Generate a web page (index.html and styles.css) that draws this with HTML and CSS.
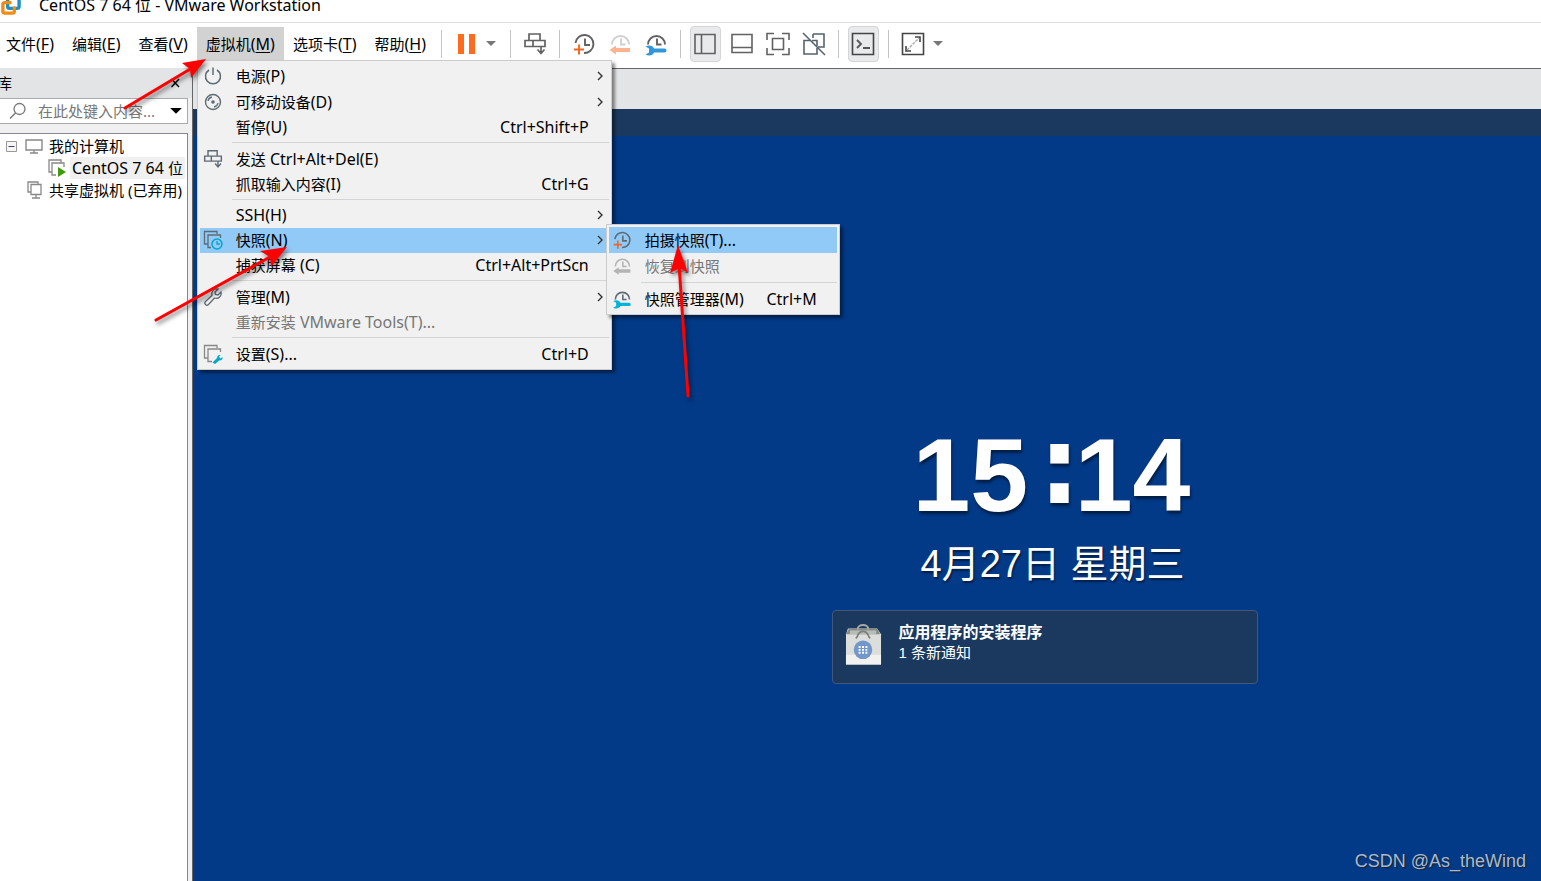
FILE: index.html
```html
<!DOCTYPE html>
<html lang="zh-CN">
<head>
<meta charset="utf-8">
<title>CentOS 7 64 位 - VMware Workstation</title>
<link rel="stylesheet" href="styles.css">
</head>
<body>
<svg class="defs" width="0" height="0" aria-hidden="true">
  <symbol id="send" viewBox="0 0 24 24"><path d="M6 2h11v6.500H6zM2 8.500h8v6H2zM10 8.500h12v6H10zM18 14.500v7M14.500 17.500l3.500 4 3.500-4" fill="none" stroke="currentColor" stroke-width="1.700"/></symbol>
  <symbol id="clock" viewBox="0 0 24 24"><path d="M3.500 11A9 9 0 1 1 12 21M13 6.500v6.500h5" fill="none" stroke="currentColor" stroke-width="1.900"/></symbol>
  <symbol id="halfclock" viewBox="0 0 24 24"><path d="M4 12.500a8.500 8.500 0 0 1 17 0M13 6.500v6h4.500" fill="none" stroke="currentColor" stroke-width="1.900"/></symbol>
  <symbol id="plus" viewBox="0 0 24 24"><path d="M2 17.500h10M7 12.500v10" fill="none" stroke="#f26522" stroke-width="1.900"/></symbol>
  <symbol id="back" viewBox="0 0 24 24"><path d="M1.500 18 8 13.500v2.500h14v4H8v2.500z" fill="currentColor"/></symbol>
  <symbol id="wrench" viewBox="0 0 24 24"><path d="M1.500 14.500C5 12.500 9 13.500 10 16.500H20.500a2 2 0 0 1 0 4H10C9 23.500 5 24.500 1.500 22.500L5 20.500v-4z" fill="currentColor"/></symbol>
  <symbol id="caret" viewBox="0 0 10 6"><path d="M0 0h10L5 5z" fill="currentColor"/></symbol>
  <symbol id="chev" viewBox="0 0 6 10"><path d="M1 1l4 4-4 4" fill="none" stroke="#333" stroke-width="1.400"/></symbol>
</svg>

<header class="titlebar">
  <svg class="logo" viewBox="0 0 22 22" aria-hidden="true"><rect x="8" y="3" width="12" height="11" rx="2" fill="none" stroke="#1d8fc4" stroke-width="3.500"/><path d="M12 8H5a2 2 0 0 0-2 2v7a2 2 0 0 0 2 2h8a2 2 0 0 0 2-2v-5" fill="none" stroke="#f28c13" stroke-width="3.500"/></svg>
  <h1>CentOS 7 64 位 - VMware Workstation</h1>
</header>

<div class="commandbar">
  <nav class="menubar">
    <button>文件<span class="en">(<u>F</u>)</span></button>
    <button>编辑<span class="en">(<u>E</u>)</span></button>
    <button>查看<span class="en">(<u>V</u>)</span></button>
    <div class="dropdown">
      <button class="open">虚拟机<span class="en">(<u>M</u>)</span></button>
      <div class="menu main" role="menu">
        <button class="tall"><svg viewBox="0 0 20 20"><path d="M6 4a7.500 7.500 0 1 0 8 0M10 1.500V9" fill="none" stroke="currentColor" stroke-width="1.500"/></svg><span>电源<span class="en">(P)</span></span><svg class="chev"><use href="#chev"/></svg></button>
        <button class="tall"><svg viewBox="0 0 20 20"><circle cx="10" cy="10" r="7.500" fill="none" stroke="currentColor" stroke-width="1.400"/><circle cx="10" cy="10" r="1.800" fill="currentColor"/><path d="M5 9a5 5 0 0 1 4-4M15 11a5 5 0 0 1-4 4" fill="none" stroke="currentColor" stroke-width="1.300"/></svg><span>可移动设备<span class="en">(D)</span></span><svg class="chev"><use href="#chev"/></svg></button>
        <button><i></i><span>暂停<span class="en">(U)</span></span><kbd>Ctrl+Shift+P</kbd></button>
        <hr>
        <button><svg><use href="#send"/></svg><span>发送<span class="en"> Ctrl+Alt+Del(E)</span></span></button>
        <button><i></i><span>抓取输入内容<span class="en">(I)</span></span><kbd>Ctrl+G</kbd></button>
        <hr class="tight">
        <button><i></i><span class="en">SSH(H)</span><svg class="chev"><use href="#chev"/></svg></button>
        <div class="dropdown">
          <button class="active"><svg viewBox="0 0 20 20"><path d="M5 14H1.500V1.500H14V4M8 17.500H5V5h12.500v3" fill="none" stroke="currentColor" stroke-width="1.300"/><circle cx="14" cy="14" r="5" fill="#91c9f7" stroke="#00a7d0" stroke-width="1.500"/><path d="M14 11v3h3" fill="none" stroke="#00a7d0" stroke-width="1.300"/></svg><span>快照<span class="en">(N)</span></span><svg class="chev"><use href="#chev"/></svg></button>
          <div class="menu sub" role="menu">
            <button class="active tall"><svg><use href="#clock"/><use href="#plus"/></svg><span>拍摄快照<span class="en">(T)...</span></span></button>
            <button class="tall" disabled><svg><use href="#halfclock"/><use href="#back"/></svg><span>恢复到快照</span></button>
            <hr>
            <button><svg><use href="#halfclock"/><use class="cyan" href="#wrench"/></svg><span>快照管理器<span class="en">(M)</span></span><kbd>Ctrl+M</kbd></button>
          </div>
        </div>
        <button><i></i><span>捕获屏幕<span class="en"> (C)</span></span><kbd>Ctrl+Alt+PrtScn</kbd></button>
        <hr>
        <button><svg viewBox="0 0 20 20"><path d="M2.500 17.500c-1.200-1.200-.8-2.200 0-3L9 8.500C8 4.500 11 1 15 2l-3 3 .5 2.500 2.500.5 3-3c1 4-2.500 7.500-6.500 6l-6 6.500c-.8.8-1.800 1.200-3 0z" fill="none" stroke="currentColor" stroke-width="1.300"/></svg><span>管理<span class="en">(M)</span></span><svg class="chev"><use href="#chev"/></svg></button>
        <button disabled><i></i><span>重新安装<span class="en"> VMware Tools(T)...</span></span></button>
        <hr>
        <button><svg viewBox="0 0 20 20"><path d="M4.500 14H1.500V1.500H14V4M9 17.500H5V5h12.500v3" fill="none" stroke="#888" stroke-width="1.300"/><path d="M9.500 18.500l4.500-4.500c-.2-2 1.500-3.500 3.500-3l-1.500 2 1.500 1.500 2-1.500c.5 2.500-1.500 4-3.500 3.500l-4 3.500z" fill="#00a7d0"/></svg><span>设置<span class="en">(S)...</span></span><kbd>Ctrl+D</kbd></button>
      </div>
    </div>
    <button>选项卡<span class="en">(<u>T</u>)</span></button>
    <button>帮助<span class="en">(<u>H</u>)</span></button>
  </nav>
  <div class="group">
    <button class="tool" aria-label="挂起"><svg viewBox="0 0 24 24"><path d="M4 2h6v20H4zM15 2h6v20h-6z" fill="#ff6b1e"/></svg></button><button class="drop" aria-label="电源选项"><svg><use href="#caret"/></svg></button>
  </div>
  <div class="group"><button class="tool" aria-label="发送按键"><svg><use href="#send"/></svg></button></div>
  <div class="group gaps">
    <button class="tool" aria-label="拍摄快照"><svg><use href="#clock"/><use href="#plus"/></svg></button>
    <button class="tool" aria-label="恢复快照" disabled><svg><use class="pale" href="#halfclock"/><use class="peach" href="#back"/></svg></button>
    <button class="tool" aria-label="管理快照"><svg><use href="#halfclock"/><use class="blue" href="#wrench"/></svg></button>
  </div>
  <div class="group gaps">
    <button class="tool on" aria-label="库"><svg viewBox="0 0 24 24"><path d="M2 2.500h20v19H2zM8.500 2.500v19" fill="none" stroke="currentColor" stroke-width="1.600"/></svg></button>
    <button class="tool" aria-label="缩略图栏"><svg viewBox="0 0 24 24"><path d="M2 2.500h20v18H2zM2 15.500h20" fill="none" stroke="currentColor" stroke-width="1.600"/></svg></button>
    <button class="tool" aria-label="全屏"><svg viewBox="0 0 24 24"><path d="M1 8V1.500h7M16 1.500h7V8M23 16v6.500h-7M8 22.500H1V16M6.500 6.500h11v11h-11z" fill="none" stroke="currentColor" stroke-width="1.600"/></svg></button>
    <button class="tool" aria-label="Unity"><svg viewBox="0 0 24 24"><path d="M8 8.500H2V22h13v-6M11 2h11v13h-6M11 2v4M10 8.500h5V14" fill="none" stroke="#56636e" stroke-width="1.600"/><path d="M1 1l22 22" stroke="#56636e" stroke-width="1.600"/></svg></button>
  </div>
  <div class="group"><button class="tool on" aria-label="控制台"><svg viewBox="0 0 24 24"><path d="M1.500 1.500h21v21h-21z" fill="none" stroke="#444" stroke-width="1.600"/><path d="M6 8l4 4-4 4M12 16h7" fill="none" stroke="#555" stroke-width="1.800"/></svg></button></div>
  <div class="group"><button class="tool" aria-label="拉伸"><svg viewBox="0 0 24 24"><path d="M1.500 1.500h21v21h-21zM14 5h5v5M5 14v5h5" fill="none" stroke="#444" stroke-width="1.600"/><path d="M6 18L18 6" stroke="#aaa" stroke-width="1.400" stroke-dasharray="3 1"/></svg></button><button class="drop" aria-label="拉伸选项"><svg><use href="#caret"/></svg></button></div>
</div>

<div class="workspace">
  <aside class="library">
    <div class="libhead"><h2>库</h2><button aria-label="关闭"><svg viewBox="0 0 9 10"><path d="M.5 1l7.500 8M8 1L.5 9" stroke="#000" stroke-width="1.400"/></svg></button></div>
    <div class="search">
      <svg viewBox="0 0 18 18" aria-hidden="true"><circle cx="10.500" cy="7" r="5.500" fill="none" stroke="#777" stroke-width="1.300"/><path d="M6.500 11L1 16.500" stroke="#777" stroke-width="1.500"/></svg>
      <input type="text" aria-label="搜索" placeholder="在此处键入内容...">
      <button aria-label="搜索选项"><svg><use href="#caret"/></svg></button>
    </div>
    <ul class="tree">
      <li><svg class="minus" viewBox="0 0 11 11"><path d="M.5.5h10v10H.5z" fill="#f6f6f6" stroke="#999"/><path d="M2.500 5.500h6" stroke="#446"/></svg><svg class="node" viewBox="0 0 18 18"><path d="M1 3h16v10H1zM9 13v3M5 16h8" fill="none" stroke="#888" stroke-width="1.400"/></svg><span>我的计算机</span></li>
      <li class="child"><svg class="node" viewBox="0 0 18 18"><path d="M4 13H1V1h12v3M8 16H4V4h12v4" fill="none" stroke="#888" stroke-width="1.300"/><path d="M10 8l8 5-8 5z" fill="#3f9b0b"/></svg><span class="selected"><span class="en">CentOS 7 64 </span>位</span></li>
      <li class="root"><svg class="node" viewBox="0 0 18 18"><path d="M6 11H3V1h10v2.500M6 3.500h10v10H6zM11 13.500V17M7 17h8" fill="none" stroke="#888" stroke-width="1.300"/></svg><span>共享虚拟机 (已弃用)</span></li>
    </ul>
  </aside>
  <main class="console">
    <div class="tabstrip"></div>
    <div class="guestbar"></div>
    <div class="guest">
      <div class="clock">15<span class="colon">∶</span>14</div>
      <div class="date">4月27日 星期三</div>
      <section class="notice">
        <svg viewBox="0 0 38 42" aria-hidden="true"><path d="M3 4h30l4 6v31H1V10z" fill="#dcdedb"/><path d="M4 4h29l3 6H1z" fill="#858a85"/><path d="M5 6h27v4H5z" fill="#b8bcb7"/><path d="M13 5c0-6 11-6 11 0" fill="none" stroke="#a6aaa6" stroke-width="2"/><path d="M1 31h36v10H1z" fill="#f1f2f0"/><path d="M11 14c3-1 1-7 7.500-7s4.500 6 7.500 7" fill="none" stroke="#7b7f7b" stroke-width="1.800"/><circle cx="18.500" cy="26" r="9.500" fill="#7297c8"/><path d="M14 23h2M17.500 23h2M21 23h2M14 26h2M17.500 26h2M21 26h2M14 29h2M17.500 29h2M21 29h2" stroke="#fff" stroke-width="2"/></svg>
        <div><h3>应用程序的安装程序</h3><p>1 条新通知</p></div>
      </section>
      <footer class="watermark">CSDN @As_theWind</footer>
    </div>
  </main>
</div>

<svg class="arrows" width="720" height="420" viewBox="0 0 720 420" aria-hidden="true">
  <g fill="none" stroke="#f00" stroke-width="3" stroke-linecap="round"><path d="M125 108L192 68M156 320L270 257M688 396L679 264"/></g>
  <g fill="#f00"><path d="M206 59L191 78L190 69L182 63z"/><path d="M287 247L271 267L270 257L260 251z"/><path d="M678 245L688 273L680 268L670 273z"/></g>
</svg>
</body>
</html>
```

FILE: styles.css
```css
* { box-sizing: border-box; }
body {
  margin: 0;
  height: 100vh;
  display: flex;
  flex-direction: column;
  overflow: hidden;
  position: relative;
  background: #fff;
  color: #000;
  font: 15px/22px "Noto Sans", "Noto Sans CJK SC", sans-serif;
}
button, input { font: inherit; color: inherit; border: 0; background: none; padding: 0; }
h1, h2, h3, p, ul { margin: 0; padding: 0; font-size: inherit; font-weight: normal; }
ul { list-style: none; }
svg { display: block; }
.defs { position: absolute; }
.en, kbd { font-family: "Noto Sans", sans-serif; font-size: 16px; }
.en { white-space: pre; }
u { text-underline-offset: 2px; text-decoration-thickness: 1px; }

.titlebar {
  flex: none;
  height: 23px;
  display: flex;
  align-items: flex-end;
  overflow: hidden;
  border-bottom: 1px solid #e0e0e0;
}
.titlebar h1 { margin: 0 0 6px 18px; font-size: 16px; }
.logo { width: 21px; height: 21px; margin-bottom: 6px; }

.commandbar {
  flex: none;
  height: 45px;
  display: flex;
  align-items: center;
  padding-bottom: 4px;
}
.menubar { display: flex; margin: 0 6px 0 -3px; }
.menubar > button, .dropdown > .open { height: 34px; padding: 0 9px; white-space: nowrap; }
.open { background: #d2d2d2; }
.dropdown { position: relative; }
.group {
  display: flex;
  align-items: center;
  height: 28px;
  padding: 0 9px;
  border-left: 1px solid #c4c4c4;
}
.gaps { gap: 6px; }
.tool {
  width: 30px;
  height: 36px;
  display: grid;
  place-items: center;
  border-radius: 4px;
  color: #626262;
}
.tool svg { width: 24px; height: 24px; }
.tool.on { width: 31px; background: #e9eaeb; border: 1px solid #d4d5d6; }
.drop { width: 20px; display: grid; place-items: center; color: #777; }
.drop svg, .search button svg { width: 10px; height: 6px; }
.pale { color: #d0d0d0; }
.peach { color: #fcb38f; }
.blue { color: #2f97da; }
.cyan { color: #00b4d8; }

.menu {
  position: absolute;
  z-index: 2;
  padding: 2px;
  background: #f1f1f1;
  border: 1px solid #ccc;
  box-shadow: 3px 3px 3px rgba(0, 0, 0, .45);
}
.main { top: 33px; left: 0; width: 415px; }
.sub { top: -4px; left: 406px; width: 234px; }
.menu button {
  width: 100%;
  height: 25px;
  display: grid;
  grid-template-columns: 36px 1fr auto;
  align-items: center;
  text-align: left;
  white-space: nowrap;
  padding-right: 20px;
}
.menu button.tall { height: 26px; }
.menu button > svg:first-child { width: 20px; height: 20px; margin-left: 3px; color: #5d6b75; }
.menu button > .chev { width: 6px; height: 10px; margin-right: -14px; margin-left: 14px; }
.menu button:disabled { color: #777; }
.menu button:disabled > svg:first-child { color: #b4b4b4; }
.menu .active { background: #91c9f7; }
.menu hr { height: 1px; margin: 2px 0 4px 32px; border: 0; background: #d4d4d4; }
.menu .tight { margin-bottom: 3px; }
.sub hr { margin-top: 3px; }

.workspace { flex: 1; min-height: 0; display: flex; }
.library {
  flex: none;
  width: 192px;
  display: flex;
  flex-direction: column;
  padding-right: 4px;
  background: #f0f0f0;
  box-shadow: inset 0 30px #e3e4e6;
}
.libhead { flex: none; height: 30px; display: flex; align-items: center; justify-content: space-between; padding-right: 8px; }
.libhead h2 { margin-left: -3px; }
.libhead button svg { width: 9px; height: 10px; }
.search {
  flex: none;
  height: 26px;
  display: flex;
  align-items: center;
  padding: 0 5px 0 9px;
  border: 1px solid #aaa;
  border-left: 0;
  background: #fff;
}
.search > svg { flex: none; width: 18px; height: 18px; }
.search input { flex: 1; min-width: 0; padding-left: 11px; outline: 0; }
.search input::placeholder { color: #777; }
.search button svg { width: 12px; height: 7px; }
.tree {
  flex: 1;
  margin-top: 9px;
  padding-top: 1px;
  border: solid #828790;
  border-width: 1px 1px 0 0;
  background: #fff;
}
.tree li { display: flex; align-items: center; height: 22px; padding-left: 6px; white-space: nowrap; }
.tree .child { padding-left: 48px; }
.tree .root { padding-left: 25px; }
.minus { width: 11px; height: 11px; margin-right: 8px; }
.node { width: 18px; height: 18px; margin-right: 6px; }
.child .node { margin-right: 4px; }
.selected { padding: 0 2px; background: #f0f0f0; }

.console {
  flex: 1;
  min-width: 0;
  display: flex;
  flex-direction: column;
  border: solid #666;
  border-width: 1px 0 0 1px;
}
.tabstrip { flex: none; height: 40px; background: #e3e4e6; }
.guestbar { flex: none; height: 27px; background: #1b385f; }
.guest {
  flex: 1;
  display: flex;
  flex-direction: column;
  align-items: center;
  padding: 289px 0 0 355px;
  background: #023a88;
  color: #fff;
  font-family: "Liberation Sans", "Noto Sans CJK SC", sans-serif;
}
.clock { height: 100px; margin-left: 14px; font-size: 104px; line-height: 100px; font-weight: bold; text-shadow: 1px 3px 3px rgba(0, 0, 0, .5); }
.colon { margin-left: 16px; font-family: "DejaVu Sans", sans-serif; }
.date { margin: 11px 0 0 16px; font-size: 38px; line-height: 56px; text-shadow: 1px 2px 2px rgba(0, 0, 0, .5); }
.notice {
  width: 426px;
  height: 74px;
  display: flex;
  gap: 17px;
  margin-top: 18px;
  padding: 12px;
  border: 1px solid #40587a;
  border-radius: 4px;
  background: #1b385f;
}
.notice svg { width: 37px; height: 44px; }
.notice h3 { font-size: 16px; line-height: 20px; font-weight: bold; }
.notice p { line-height: 20px; }
.watermark {
  align-self: flex-end;
  margin: auto 15px 8px 0;
  color: #a9b9d2;
  font-size: 18px;
  line-height: 24px;
  text-shadow: 1px 1px 1px #222;
}
.arrows {
  position: absolute;
  top: 0;
  left: 0;
  z-index: 5;
  pointer-events: none;
  filter: drop-shadow(2px 3px 2px rgba(0, 0, 0, .5));
}
```
